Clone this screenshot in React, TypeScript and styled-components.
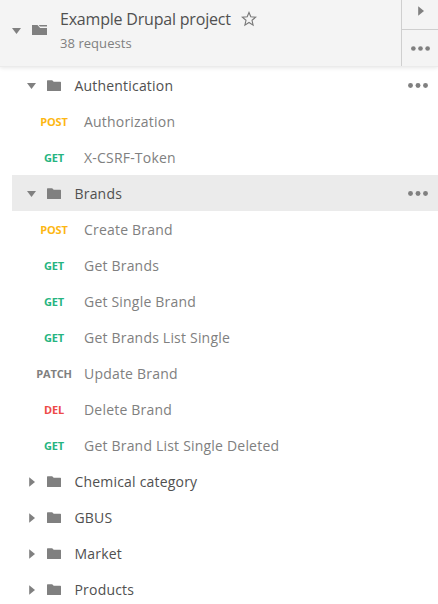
import React from "react";
import styled, { createGlobalStyle } from "styled-components";

const GlobalStyle = createGlobalStyle`
  * { box-sizing: border-box; }
  body { margin: 0; background: #fff; overflow: hidden; }
  button { border: 0; background: none; padding: 0; margin: 0; display: flex; color: inherit; }
`;

const Sidebar = styled.main`
  width: 438px;
  height: 604px;
  overflow: hidden;
  font-family: "Open Sans", sans-serif;
  background: #fff;
  color: #505050;
`;

const Header = styled.header`
  display: flex;
  height: 67px;
  background: #f4f4f4;
  border-bottom: 1px solid #ebebeb;
  box-shadow: 0 1px 4px rgba(0, 0, 0, 0.1);
`;

const HeaderMain = styled.div`
  display: flex;
  flex: 1;
  padding-left: 12px;
`;

const HeaderCaret = styled.div`
  display: flex;
  width: 20px;
  padding-top: 28px;
`;

const HeaderFolder = styled.div`
  display: flex;
  width: 28px;
  padding-top: 24px;
`;

const Title = styled.h1`
  display: flex;
  align-items: center;
  gap: 10px;
  height: 24px;
  margin: 7px 0 0;
  font-size: 16px;
  font-weight: 400;
  letter-spacing: -0.2px;
  white-space: nowrap;
`;

const Subtitle = styled.p`
  margin: 2px 0 0;
  font-size: 13px;
  line-height: 20px;
  letter-spacing: 0.05px;
  color: #808080;
`;

const HeaderActions = styled.div`
  display: grid;
  grid-template-rows: 30px 36px;
  width: 37px;
  border-left: 1px solid #cfcfcf;
`;

const PlayAction = styled.div`
  padding: 6px 0 0 14px;
  border-bottom: 1px solid #cfcfcf;
`;

const MoreAction = styled.div`
  padding: 16px 0 0 9px;
`;

const List = styled.div`
  display: flex;
  flex-direction: column;
`;

const FolderRow = styled.div<{ $selected?: boolean }>`
  display: flex;
  align-items: center;
  flex: none;
  height: 36px;
  margin-left: 12px;
  padding: 0 10px 0 15px;
  background: ${(p) => (p.$selected ? "#ebebeb" : "transparent")};
`;

const CaretSlot = styled.span`
  display: flex;
  width: 20px;
  padding-top: 2px;
`;

const FolderSlot = styled.span`
  display: flex;
  width: 27.5px;
  padding-top: 2px;
`;

const FolderName = styled.span`
  flex: 1;
  font-size: 14px;
  line-height: 20px;
  letter-spacing: 0.19px;
  padding-top: 1px;
`;

const RequestRow = styled.div`
  display: flex;
  align-items: center;
  flex: none;
  gap: 10px;
  height: 36px;
  padding-left: 34px;
`;

const methodColors = {
  POST: "#fdb714",
  GET: "#26b47f",
  PATCH: "#808080",
  DEL: "#ed4b48",
};
type MethodName = keyof typeof methodColors;

const Method = styled.span<{ $method: MethodName }>`
  width: 40px;
  padding-top: 1px;
  text-align: center;
  font-size: 11px;
  line-height: 14px;
  letter-spacing: -0.15px;
  font-weight: 700;
  color: ${(p) => methodColors[p.$method]};
`;

const RequestName = styled.span`
  padding-top: 1px;
  font-size: 14px;
  line-height: 20px;
  letter-spacing: 0.2px;
  color: #808080;
`;

const Icon = styled.svg`
  display: block;
  flex: none;
  fill: #808080;
`;

const CaretDown = () => (
  <Icon width="10" height="6" viewBox="0 0 10 6">
    <path d="M0 0h9L4.5 6z" />
  </Icon>
);

const CaretRight = () => (
  <Icon width="9" height="10" viewBox="0 0 9 10">
    <path d="M2.200 .3v9.400L8 5z" />
  </Icon>
);

const Folder = () => (
  <Icon width="14" height="12" viewBox="0 0 14 12">
    <path d="M.6.3H5.200L6.700 1.800h6.700q.6 0 .6.6v8.100q0 .6-.6.6H.6Q0 11.100 0 10.500V.9Q0 .3.600.3z" />
  </Icon>
);

const CollectionFolder = () => (
  <Icon width="15" height="12" viewBox="0 0 15 12">
    <path d="M0 1h5.500l2.600 2.900H15V11H0z" />
    <path d="M6.700 1H15v1.400H8z" />
  </Icon>
);

const Star = () => (
  <Icon width="16" height="16" viewBox="0 0 16 16">
    <path
      d="M8 1.500l1.800 4.300 4.900.4-3.700 3.100 1.100 4.800L8 11.500l-4.100 2.600L5 9.300 1.300 6.200l4.900-.4z"
      fill="none"
      stroke="#777"
      strokeWidth="1.1"
    />
  </Icon>
);

const Dots = ({ compact = false }: { compact?: boolean }) => (
  <Icon width={compact ? 19 : 20} height="5" viewBox="0 0 20 5">
    <circle cx="2.500" cy="2.500" r="2.450" />
    <circle cx="10" cy="2.500" r="2.450" />
    <circle cx="17.500" cy="2.500" r="2.450" />
  </Icon>
);

interface Request {
  method: MethodName;
  name: string;
}
interface FolderData {
  name: string;
  selected?: boolean;
  requests?: Request[];
}

const folders: FolderData[] = [
  {
    name: "Authentication",
    requests: [
      { method: "POST", name: "Authorization" },
      { method: "GET", name: "X-CSRF-Token" },
    ],
  },
  {
    name: "Brands",
    selected: true,
    requests: [
      { method: "POST", name: "Create Brand" },
      { method: "GET", name: "Get Brands" },
      { method: "GET", name: "Get Single Brand" },
      { method: "GET", name: "Get Brands List Single" },
      { method: "PATCH", name: "Update Brand" },
      { method: "DEL", name: "Delete Brand" },
      { method: "GET", name: "Get Brand List Single Deleted" },
    ],
  },
  { name: "Chemical category" },
  { name: "GBUS" },
  { name: "Market" },
  { name: "Products" },
];

export default function App() {
  return (
    <Sidebar>
      <GlobalStyle />
      <Header>
        <HeaderMain>
          <HeaderCaret><CaretDown /></HeaderCaret>
          <HeaderFolder><CollectionFolder /></HeaderFolder>
          <div>
            <Title>
              Example Drupal project
              <button aria-label="Favorite"><Star /></button>
            </Title>
            <Subtitle>38 requests</Subtitle>
          </div>
        </HeaderMain>
        <HeaderActions>
          <PlayAction>
            <button aria-label="Open details"><CaretRight /></button>
          </PlayAction>
          <MoreAction>
            <button aria-label="Collection actions"><Dots compact /></button>
          </MoreAction>
        </HeaderActions>
      </Header>
      <List>
        {folders.map((folder) => (
          <React.Fragment key={folder.name}>
            <FolderRow $selected={folder.selected}>
              <CaretSlot>{folder.requests ? <CaretDown /> : <CaretRight />}</CaretSlot>
              <FolderSlot><Folder /></FolderSlot>
              <FolderName>{folder.name}</FolderName>
              {folder.requests && (
                <button aria-label={`${folder.name} actions`}><Dots /></button>
              )}
            </FolderRow>
            {folder.requests?.map((request) => (
              <RequestRow key={request.name}>
                <Method $method={request.method}>{request.method}</Method>
                <RequestName>{request.name}</RequestName>
              </RequestRow>
            ))}
          </React.Fragment>
        ))}
      </List>
    </Sidebar>
  );
}
